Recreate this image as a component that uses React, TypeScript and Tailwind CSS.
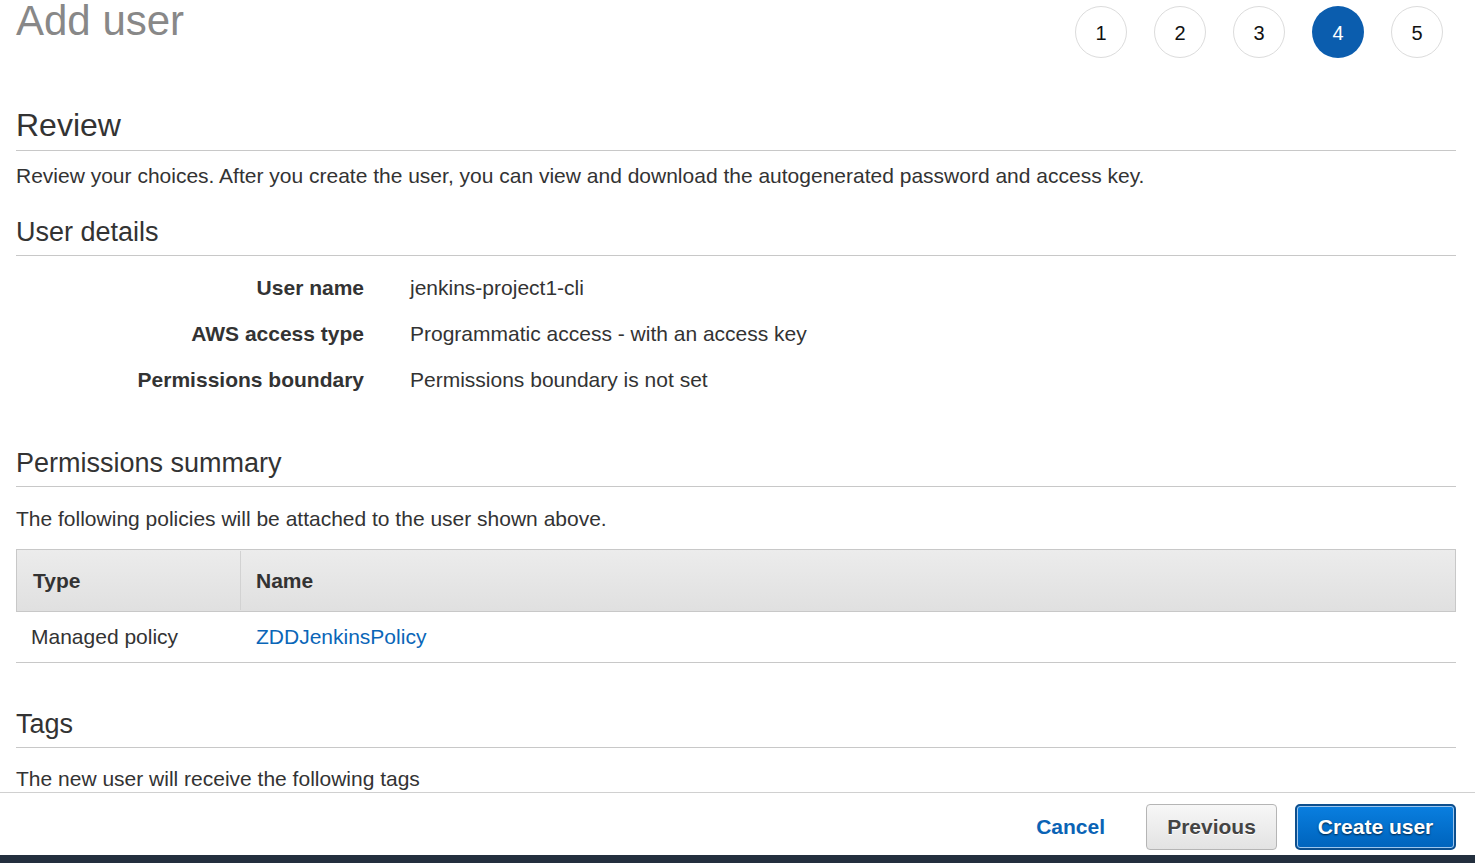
import React from "react";

const font = { fontFamily: '"Liberation Sans", Arial, Helvetica, sans-serif' };

function Steps() {
  const steps = [1, 2, 3, 4, 5];
  return (
    <div className="flex gap-[27px] pt-[6px]">
      {steps.map((s) => (
        <div
          key={s}
          className={
            s === 4
              ? "w-[52px] h-[52px] rounded-full bg-[#0b5dae] text-white flex items-center justify-center text-[20px] pt-[2px]"
              : "w-[52px] h-[52px] rounded-full border border-[#dcdcdc] bg-white text-[#111] flex items-center justify-center text-[20px] pt-[2px]"
          }
        >
          {s}
        </div>
      ))}
    </div>
  );
}

function SectionHeading({ children, className }: { children: React.ReactNode; className: string }) {
  return (
    <h2 className={"text-[27px] leading-[32px] text-[#333] pb-[7px] border-b border-[#c8c8c8] font-normal " + className}>
      {children}
    </h2>
  );
}

export default function App() {
  return (
    <div style={font} className="w-[1475px] h-[863px] bg-white flex flex-col overflow-hidden text-[#333]">
      <div className="h-[792px] overflow-hidden pl-[16px] pr-[19px]">
        <div className="h-[64px] flex justify-between items-start">
          <h1 className="text-[42px] leading-[42px] text-[#888] font-normal">Add user</h1>
          <div className="pr-[13px]">
            <Steps />
          </div>
        </div>

        <h2 className="mt-[43px] text-[32px] leading-[36px] text-[#333] pb-[7px] border-b border-[#c8c8c8] font-normal">
          Review
        </h2>
        <p className="mt-[11px] text-[21px] leading-[28px]">
          Review your choices. After you create the user, you can view and download the autogenerated password and access key.
        </p>

        <SectionHeading className="mt-[26px]">User details</SectionHeading>

        <div className="mt-[18px] flex flex-col gap-[18px] text-[21px] leading-[28px]">
          {[
            ["User name", "jenkins-project1-cli"],
            ["AWS access type", "Programmatic access - with an access key"],
            ["Permissions boundary", "Permissions boundary is not set"],
          ].map(([k, v]) => (
            <div key={k} className="flex">
              <div className="w-[348px] text-right font-bold">{k}</div>
              <div className="ml-[46px]">{v}</div>
            </div>
          ))}
        </div>

        <SectionHeading className="mt-[53px]">Permissions summary</SectionHeading>
        <p className="mt-[18px] text-[21px] leading-[28px]">The following policies will be attached to the user shown above.</p>

        <div className="mt-[16px] text-[21px]">
          <div className="flex h-[63px] border border-[#c8c8c8] bg-gradient-to-b from-[#ececec] to-[#e0e0e0]">
            <div className="w-[224px] flex items-center pl-[16px] font-bold border-r border-[#d2d2d2] my-[1px]">Type</div>
            <div className="flex-1 flex items-center pl-[15px] font-bold">Name</div>
          </div>
          <div className="flex h-[51px] border-b border-[#c8c8c8]">
            <div className="w-[225px] flex items-center pl-[15px]">Managed policy</div>
            <div className="flex-1 flex items-center pl-[15px] text-[#0a66b8]">ZDDJenkinsPolicy</div>
          </div>
        </div>

        <SectionHeading className="mt-[45px]">Tags</SectionHeading>
        <p className="mt-[17px] text-[21px] leading-[28px]">The new user will receive the following tags</p>
      </div>

      <div className="h-[63px] border-t border-[#d0d0d0] bg-white flex items-start pt-[11px] justify-end pr-[19px]">
        <button className="h-[46px] text-[21px] font-bold text-[#0a63b5] mr-[41px]">Cancel</button>
        <button className="w-[131px] h-[46px] rounded-[4px] border border-[#b5b5b5] bg-gradient-to-b from-[#f7f7f7] to-[#e3e3e3] text-[21px] font-bold text-[#444] [text-shadow:0_1px_0_#fff] mr-[18px]">
          Previous
        </button>
        <button className="w-[161px] h-[46px] rounded-[5px] border-[2px] border-[#0d4f8e] shadow-[inset_0_0_0_1px_#9cc6ee] bg-gradient-to-b from-[#0a7fe0] to-[#0063bc] text-[21px] font-bold text-white [text-shadow:0_1px_2px_rgba(0,0,0,0.7)]">
          Create user
        </button>
      </div>
      <div className="h-[8px] bg-[#232f3e]" />
    </div>
  );
}
